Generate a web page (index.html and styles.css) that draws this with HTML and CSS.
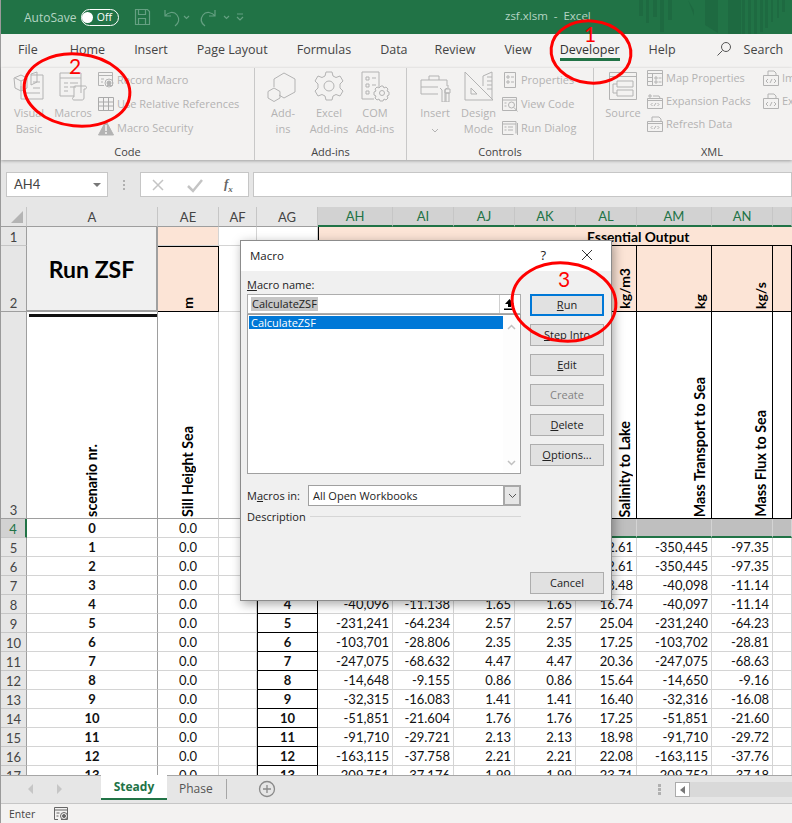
FILE: index.html
```html
<!DOCTYPE html>
<html lang="en">
<head>
  <meta charset="utf-8">
  <title>zsf.xlsm - Excel</title>
  <link rel="stylesheet" href="styles.css">
</head>
<body>
<div class="window">

  <!-- title bar -->
  <div class="titlebar">
    <svg class="pattern" width="172" height="34" viewBox="0 0 172 34">
      <path d="M19 0h4v16h-4zM26 0h3v23h-3zM33 0h4v17h-4zM40 0h4v32h-4zM48 0h4v20h-4zM68 0l6 10v6zM85 0h13v33l-13-8zM108 0h13v34h-13zM122 0h3v34h-3zM128 0h3v34h-3zM134 0h3v34h-3zM140 0h3v32h-3zM145 0h3v28h-3zM151 0h2v22h-2zM157 0h2v18h-2zM162 0h3v12h-3z"/>
    </svg>
    <span class="autosave">AutoSave</span>
    <span class="toggle"><i></i>Off</span>
    <svg class="qat" width="110" height="20" viewBox="0 0 110 20">
      <path d="M1.500 2.500h12l2 2v13h-14zM4.500 2.500v5h7v-5M4.500 17.500v-6h7v6"/>
      <path d="M31 3v6h6M31 9c3-4 9-5 12-1s2 8-2 11"/>
      <path d="M50 9l2.500 2.500 2.500-2.500" />
      <path d="M81 3v6h-6M81 9c-3-4-9-5-12-1s-2 8 2 11"/>
      <path d="M90 9l2.500 2.500 2.500-2.500" />
      <path d="M103 7h6M103 10l3 3 3-3"/>
    </svg>
    <span class="doc-title">zsf.xlsm &nbsp;-&nbsp; Excel</span>
  </div>

  <!-- ribbon tabs -->
  <div class="tabs">
    <span class="tab-file">File</span>
    <span>Home</span>
    <span>Insert</span>
    <span>Page Layout</span>
    <span>Formulas</span>
    <span class="tab-data">Data</span>
    <span>Review</span>
    <span class="tab-view">View</span>
    <span class="active">Developer</span>
    <span>Help</span>
    <svg class="search-icon" width="16" height="16" viewBox="0 0 16 16"><circle cx="10" cy="6" r="4.500"/><path d="M6.500 9.500L1.500 14.500"/></svg>
    <span class="search">Search</span>
  </div>

  <!-- ribbon -->
  <div class="ribbon">
    <div class="group group-code">
      <div class="group-body">
        <div class="big w44">
          <svg width="32" height="32" viewBox="0 0 32 32"><path d="M8 16v13h22V5H18M20 12h7M20 18h7M12 23h15"/><path d="M1 8l7-3 6 3v10l-6 3-6-3zM8 11v10M2 8l6 3 6-3M18 4l6-2v10l-6 3z"/></svg>
          <span>Visual<br>Basic</span>
        </div>
        <div class="big w44">
          <svg width="32" height="32" viewBox="0 0 32 32"><path d="M24 23V3H3v23h14M3 8h21M7 13h4M13 13h8M7 17h4M13 17h6M7 21h4"/><path d="M18 16h10c2 0 2 3 0 3h-1v9c0 2-2 2-2 2h-8c-2 0-2-3 0-3v-9c0-1 0-2 1-2z"/></svg>
          <span>Macros</span>
        </div>
        <div class="small-col col-code">
          <div class="small"><svg width="16" height="16" viewBox="0 0 16 16"><path d="M.5.5h14v13H9M.5 3.500h14M.5.5v13H6M3 7h3M3 10h2"/><circle cx="11" cy="11" r="4"/><circle cx="11" cy="11" r="2" class="fill"/></svg>Record Macro</div>
          <div class="small"><svg width="16" height="16" viewBox="0 0 16 16"><path d="M.5 1.500h15v13H.5zM.5 6h15M.5 10h15M5.500 1.500v13M10.500 1.500v13" class="thick"/></svg>Use Relative References</div>
          <div class="small"><svg width="16" height="16" viewBox="0 0 16 16"><path d="M8 1l7.500 14H.5z" class="fill"/><path d="M8 5v6M8 12v2" class="white"/></svg>Macro Security</div>
        </div>
      </div>
      <div class="group-label">Code</div>
    </div>

    <div class="group group-addins">
      <div class="group-body">
        <div class="big w46">
          <svg width="32" height="32" viewBox="0 0 32 32"><path d="M17 3l11 6v13l-11 6-5-3M7 17V9l10-6"/><path d="M7 18l6 3.500V28l-6 3.500L1 28v-6.500z"/></svg>
          <span>Add-<br>ins</span>
        </div>
        <div class="big w46">
          <svg width="32" height="32" viewBox="0 0 32 32"><path d="M13 2h6l1 4 3 1.500 4-1.500 3 5-3 3v4l3 3-3 5-4-1.500-3 1.500-1 4h-6l-1-4-3-1.500-4 1.500-3-5 3-3v-4l-3-3 3-5 4 1.500L12 6z"/><circle cx="16" cy="16" r="5"/></svg>
          <span>Excel<br>Add-ins</span>
        </div>
        <div class="big w46">
          <svg width="32" height="32" viewBox="0 0 32 32"><path d="M20 17V2H3v27h12M7 7h3v3H7zM13 8h4M7 14h3v3H7zM13 15h4M7 21h3v3H7z"/><path d="M22 16l2 0 1 2 2-1 2 2-1 2 2 1v3l-2 1 1 2-2 2-2-1-1 2h-3l-1-2-2 1-2-2 1-2-2-1v-3l2-1-1-2 2-2 2 1z"/><circle cx="23" cy="23" r="2.500"/></svg>
          <span>COM<br>Add-ins</span>
        </div>
      </div>
      <div class="group-label">Add-ins</div>
    </div>

    <div class="group group-controls">
      <div class="group-body">
        <div class="big w44">
          <svg width="32" height="32" viewBox="0 0 32 32"><path d="M2 10h26v6M2 10v14h17M10 10V6h10v4M2 17h17"/><path d="M21 18l2 2v12h3V20l2-2M29 15v4M26 19h5v4h-5zM27 23h3v9h-3z"/></svg>
          <span>Insert<br><svg class="caret" width="8" height="5" viewBox="0 0 8 5"><path d="M1 1l3 3 3-3"/></svg></span>
        </div>
        <div class="big w43">
          <svg width="32" height="32" viewBox="0 0 32 32"><path d="M2 2l28 28H2zM8 18l6 6H8z"/><path d="M20 6l9-4v27M20 6v10M24 7h5M24 11h5M24 15h5M24 19h5"/></svg>
          <span>Design<br>Mode</span>
        </div>
        <div class="small-col col-controls">
          <div class="small"><svg width="16" height="16" viewBox="0 0 16 16"><path d="M2.500.5h11v15h-11zM5 4h2v2H5zM9 5h3M5 9h2v2H5zM9 10h3"/></svg>Properties</div>
          <div class="small"><svg width="16" height="16" viewBox="0 0 16 16"><path d="M.5 1.500h14v13h-14zM.5 4h14M2.500 7h2M2.500 10h2"/><circle cx="9.500" cy="9" r="3"/><path d="M12 11.500l3.500 4" /></svg>View Code</div>
          <div class="small"><svg width="16" height="16" viewBox="0 0 16 16"><path d="M14 13.500V1.500H.5v13h11M.5 4h13.500M2.500 7h2M6 7h5M2.500 10h2M6 10h5M15.500 3v12"/></svg>Run Dialog</div>
        </div>
      </div>
      <div class="group-label">Controls</div>
    </div>

    <div class="group group-xml">
      <div class="group-body">
        <div class="big w50">
          <svg width="32" height="32" viewBox="0 0 32 32"><path d="M2.500 2.500h27v27h-27zM2.500 6.500h27"/><path d="M10 11h16v6H10zM10 20h16v6H10zM6 14h4M6 14v9h4"/></svg>
          <span>Source</span>
        </div>
        <div class="small-col col-xml">
          <div class="small"><svg width="16" height="16" viewBox="0 0 16 16"><path d="M.5.5h15v15H.5zM.5 3.500h15M5.500 3.500v12M.5 7.500h5M.5 11.500h5M8 7h2v2H8zM11.500 8h3M8 11h2v2H8zM11.500 12h3"/></svg>Map Properties</div>
          <div class="small"><svg width="16" height="16" viewBox="0 0 16 16"><path d="M.5 5.500h15v10H.5zM.5 7.500h15M3 1v4M1 3h4M6 3h6l1 2M5.500 10l-1.500 1.500L5.500 13M10.500 10l1.500 1.500L10.500 13M7 13l2-3"/></svg>Expansion Packs</div>
          <div class="small"><svg width="16" height="16" viewBox="0 0 16 16"><path d="M.5 5.500h15v10H.5zM.5 7.500h15M5 5V1h7l2 2v2M5.500 10l-1.500 1.500L5.500 13M10.500 10l1.500 1.500L10.500 13M7 13l2-3"/></svg>Refresh Data</div>
        </div>
        <div class="small-col col-xml2">
          <div class="small"><svg width="16" height="16" viewBox="0 0 16 16"><path d="M.5 5.500h15v10H.5zM5 5V1h6l2 2v2M5 9l-2 2 2 2M11 9l2 2-2 2M7 13l2-4"/></svg>Import</div>
          <div class="small"><svg width="16" height="16" viewBox="0 0 16 16"><path d="M.5 5.500h15v10H.5zM5 5V1h6l2 2v2M5 9l-2 2 2 2M11 9l2 2-2 2M7 13l2-4"/></svg>Export</div>
        </div>
      </div>
      <div class="group-label">XML</div>
    </div>
  </div>

  <!-- formula bar -->
  <div class="formula-bar">
    <div class="name-box">AH4<i class="name-arrow"></i></div>
    <div class="grip"></div>
    <div class="fx-box">
      <svg width="16" height="16" viewBox="0 0 16 16"><path d="M3 3l10 10M13 3L3 13" class="soft"/></svg>
      <svg width="18" height="16" viewBox="0 0 18 16"><path d="M2 9l5 5 9-11" class="soft-thick"/></svg>
      <em>f<sub>x</sub></em>
    </div>
    <div class="fx-input"></div>
  </div>

  <!-- sheet -->
  <div class="sheet">
    <table class="grid">
      <colgroup>
        <col class="c-head"><col class="c-a"><col class="c-s"><col class="c-f"><col class="c-s">
        <col class="c-w"><col class="c-s"><col class="c-s"><col class="c-s"><col class="c-s">
        <col class="c-w"><col class="c-s"><col class="c-o">
      </colgroup>
      <tr class="r-head">
        <th class="corner"><i></i></th>
        <th>A</th><th>AE</th><th>AF</th><th>AG</th>
        <th class="sel">AH</th><th class="sel">AI</th><th class="sel">AJ</th><th class="sel">AK</th>
        <th class="sel">AL</th><th class="sel">AM</th><th class="sel">AN</th><th class="sel"></th>
      </tr>
      <tr class="r1">
        <th class="rh">1</th>
        <td rowspan="2" class="run">Run ZSF</td>
        <td class="peach"></td><td></td><td></td>
        <td colspan="8" class="essential">Essential Output</td>
      </tr>
      <tr class="r2">
        <th class="rh bot">2</th>
        <td class="unit ctr box"><div class="up">m</div></td>
        <td></td><td></td>
        <td class="unit box"></td><td class="unit box"></td><td class="unit box"></td><td class="unit box"></td>
        <td class="unit box"><div class="up">kg/m3</div></td>
        <td class="unit box"><div class="up">kg</div></td>
        <td class="unit box"><div class="up">kg/s</div></td>
        <td class="unit box"></td>
      </tr>
      <tr class="r3">
        <th class="rh bot">3</th>
        <td class="label ctr a-edge dbl"><div class="up">scenario nr.</div></td>
        <td class="label ctr"><div class="up">Sill Height Sea</div></td>
        <td></td><td></td>
        <td class="label"></td><td class="label"></td><td class="label"></td><td class="label"></td>
        <td class="label bk"><div class="up">Salinity to Lake</div></td>
        <td class="label bk"><div class="up">Mass Transport to Sea</div></td>
        <td class="label bk"><div class="up">Mass Flux to Sea</div></td>
        <td class="bk"></td>
      </tr>
      <tr class="r4">
        <th class="rh rsel">4</th><td class="id a-edge">0</td><td class="v">0.0</td><td></td><td></td>
        <td class="g"></td><td class="g"></td><td class="g"></td><td class="g"></td><td class="g"></td><td class="g"></td><td class="g"></td><td class="g"></td>
      </tr>
      <tr><th class="rh">5</th><td class="id a-edge">1</td><td class="v">0.0</td><td></td><td class="ag">1</td><td></td><td></td><td></td><td></td><td>22.61</td><td>-350,445</td><td>-97.35</td><td></td></tr>
      <tr><th class="rh">6</th><td class="id a-edge">2</td><td class="v">0.0</td><td></td><td class="ag">2</td><td></td><td></td><td></td><td></td><td>22.61</td><td>-350,445</td><td>-97.35</td><td></td></tr>
      <tr><th class="rh">7</th><td class="id a-edge">3</td><td class="v">0.0</td><td></td><td class="ag">3</td><td></td><td></td><td></td><td></td><td>18.48</td><td>-40,098</td><td>-11.14</td><td></td></tr>
      <tr><th class="rh">8</th><td class="id a-edge">4</td><td class="v">0.0</td><td></td><td class="ag">4</td><td>-40,096</td><td>-11.138</td><td>1.65</td><td>1.65</td><td>16.74</td><td>-40,097</td><td>-11.14</td><td></td></tr>
      <tr><th class="rh">9</th><td class="id a-edge">5</td><td class="v">0.0</td><td></td><td class="ag">5</td><td>-231,241</td><td>-64.234</td><td>2.57</td><td>2.57</td><td>25.04</td><td>-231,240</td><td>-64.23</td><td></td></tr>
      <tr><th class="rh">10</th><td class="id a-edge">6</td><td class="v">0.0</td><td></td><td class="ag">6</td><td>-103,701</td><td>-28.806</td><td>2.35</td><td>2.35</td><td>17.25</td><td>-103,702</td><td>-28.81</td><td></td></tr>
      <tr><th class="rh">11</th><td class="id a-edge">7</td><td class="v">0.0</td><td></td><td class="ag">7</td><td>-247,075</td><td>-68.632</td><td>4.47</td><td>4.47</td><td>20.36</td><td>-247,075</td><td>-68.63</td><td></td></tr>
      <tr><th class="rh">12</th><td class="id a-edge">8</td><td class="v">0.0</td><td></td><td class="ag">8</td><td>-14,648</td><td>-9.155</td><td>0.86</td><td>0.86</td><td>15.64</td><td>-14,650</td><td>-9.16</td><td></td></tr>
      <tr><th class="rh">13</th><td class="id a-edge">9</td><td class="v">0.0</td><td></td><td class="ag">9</td><td>-32,315</td><td>-16.083</td><td>1.41</td><td>1.41</td><td>16.40</td><td>-32,316</td><td>-16.08</td><td></td></tr>
      <tr><th class="rh">14</th><td class="id a-edge">10</td><td class="v">0.0</td><td></td><td class="ag">10</td><td>-51,851</td><td>-21.604</td><td>1.76</td><td>1.76</td><td>17.25</td><td>-51,851</td><td>-21.60</td><td></td></tr>
      <tr><th class="rh">15</th><td class="id a-edge">11</td><td class="v">0.0</td><td></td><td class="ag">11</td><td>-91,710</td><td>-29.721</td><td>2.13</td><td>2.13</td><td>18.98</td><td>-91,710</td><td>-29.72</td><td></td></tr>
      <tr><th class="rh">16</th><td class="id a-edge">12</td><td class="v">0.0</td><td></td><td class="ag">12</td><td>-163,115</td><td>-37.758</td><td>2.21</td><td>2.21</td><td>22.08</td><td>-163,115</td><td>-37.76</td><td></td></tr>
      <tr><th class="rh">17</th><td class="id a-edge">13</td><td class="v">0.0</td><td></td><td class="ag">13</td><td>-209,751</td><td>-37.176</td><td>1.99</td><td>1.99</td><td>23.71</td><td>-209,752</td><td>-37.18</td><td></td></tr>
    </table>
  </div>

  <!-- sheet tabs -->
  <div class="sheet-tabs">
    <svg class="tab-nav" width="46" height="12" viewBox="0 0 46 12"><path d="M6 1L1 6l5 5zM30 1l5 5-5 5z"/></svg>
    <span class="sheet-tab active">Steady</span>
    <span class="sheet-tab">Phase</span>
    <svg class="add-sheet" width="18" height="18" viewBox="0 0 18 18"><circle cx="9" cy="9" r="7.500"/><path d="M9 5v8M5 9h8"/></svg>
    <div class="hgrip"></div>
    <div class="hscroll"><span class="hbtn"><i></i></span></div>
  </div>

  <!-- status bar -->
  <div class="statusbar">
    <span>Enter</span>
    <svg width="15" height="15" viewBox="0 0 15 15"><path d="M.5 1.500h13v12H7M.5 1.500v12H4M.5 4h13M2.500 7h3M2.500 10h2"/><circle cx="10" cy="10" r="3.500"/><circle cx="10" cy="10" r="1.500" class="dark"/></svg>
  </div>
</div>

<!-- Macro dialog -->
<div class="dialog">
  <div class="dlg-title">
    <span>Macro</span>
    <span class="dlg-help">?</span>
    <svg width="12" height="12" viewBox="0 0 12 12"><path d="M1 1l10 10M11 1L1 11"/></svg>
  </div>
  <div class="dlg-body">
    <div class="dlg-left">
      <div class="dlg-label"><u>M</u>acro name:</div>
      <div class="name-input">
        <span class="picked">CalculateZSF</span>
        <span class="ref-btn"><svg width="11" height="11" viewBox="0 0 11 11"><path d="M5.500 0L10 5H7v3H4V5H1zM0 9.500h11v1.500H0z"/></svg></span>
      </div>
      <div class="macro-list">
        <div class="list-items"><div class="list-item">CalculateZSF</div></div>
        <div class="list-scroll">
          <svg width="9" height="6" viewBox="0 0 9 6"><path d="M1 5l3.500-3.500L8 5"/></svg>
          <svg width="9" height="6" viewBox="0 0 9 6"><path d="M1 1l3.500 3.500L8 1"/></svg>
        </div>
      </div>
      <div class="macros-in">
        <span><span class="in-label">M<u>a</u>cros in:</span></span>
        <div class="in-select">All Open Workbooks<span class="in-arrow"><svg width="9" height="6" viewBox="0 0 9 6"><path d="M1 1l3.500 3.500L8 1"/></svg></span></div>
      </div>
      <div class="desc"><span>Description</span><i></i></div>
    </div>
    <div class="dlg-right">
      <div class="btn primary"><span><u>R</u>un</span></div>
      <div class="btn"><span><u>S</u>tep Into</span></div>
      <div class="btn"><span><u>E</u>dit</span></div>
      <div class="btn off"><span>Create</span></div>
      <div class="btn"><span><u>D</u>elete</span></div>
      <div class="btn"><span><u>O</u>ptions...</span></div>
      <div class="btn cancel"><span>Cancel</span></div>
    </div>
  </div>
</div>

<!-- red annotations drawn on the screenshot -->
<svg class="marks" width="792" height="823" viewBox="0 0 792 823">
  <ellipse cx="591" cy="52" rx="40" ry="31" transform="rotate(6 591 52)"/>
  <ellipse cx="77" cy="90" rx="53" ry="36" transform="rotate(6 77 90)"/>
  <ellipse cx="564" cy="302" rx="52" ry="39" transform="rotate(6 564 302)"/>
  <text x="590" y="42">1</text>
  <text x="75" y="74">2</text>
  <text x="564" y="287">3</text>
</svg>
</body>
</html>
```

FILE: styles.css
```css
* {
  box-sizing: border-box;
}

html, body {
  margin: 0;
  padding: 0;
}

body {
  position: relative;
  width: 792px;
  height: 823px;
  overflow: hidden;
  font-family: "Open Sans", sans-serif;
  font-size: 11px;
  color: #444;
  background: #e6e6e6;
}

.window {
  display: flex;
  flex-direction: column;
  height: 823px;
  border-left: 1px solid #9a9a9a;
}

/* title bar */
.titlebar {
  position: relative;
  display: flex;
  align-items: center;
  height: 34px;
  padding-left: 23px;
  background: #217346;
  color: #b5d5c4;
  font-size: 12px;
}

.pattern {
  position: absolute;
  top: 0;
  right: 0;
}

.pattern path {
  fill: #1e6a41;
}

.autosave {
  width: 57px;
}

.toggle {
  display: flex;
  align-items: center;
  justify-content: flex-end;
  width: 38px;
  height: 17px;
  padding-right: 6px;
  border: 1px solid #fff;
  border-radius: 9px;
  color: #fff;
  font-size: 10.5px;
}

.toggle i {
  width: 11px;
  height: 11px;
  margin-right: 4px;
  border-radius: 50%;
  background: #fff;
}

.qat {
  margin-left: 15px;
}

.qat path {
  fill: none;
  stroke: #65a082;
  stroke-width: 1.2;
}

.doc-title {
  position: absolute;
  left: 504px;
  top: 8px;
  font-size: 11.5px;
}

/* ribbon tabs */
.tabs {
  display: flex;
  align-items: center;
  gap: 29px;
  height: 34px;
  padding: 0 0 4px 17px;
  background: #f3f2f1;
  color: #444;
  font-size: 12.5px;
  white-space: nowrap;
}

.tab-file {
  margin-right: 3px;
}

.tab-data {
  margin-right: -2px;
}

.tab-view {
  margin-right: -1px;
}

.tabs .active {
  position: relative;
  color: #333;
}

.tabs .active::after {
  content: "";
  position: absolute;
  left: 0;
  right: 0;
  bottom: -3px;
  height: 3px;
  background: #217346;
}

.search-icon {
  margin-left: 11px;
}

.search-icon circle, .search-icon path {
  fill: none;
  stroke: #555;
}

.search {
  margin-left: -17px;
}

/* ribbon */
.ribbon {
  position: relative;
  z-index: 1;
  display: flex;
  height: 92px;
  overflow: hidden;
  background: #f3f2f1;
  box-shadow: 0 1px 3px rgba(0, 0, 0, 0.3);
  color: #b3b3b3;
  font-size: 11px;
  line-height: 16px;
}

.group {
  display: flex;
  flex: none;
  flex-direction: column;
  height: 92px;
}

.group-code {
  width: 254px;
  border-right: 1px solid #c8c8c8;
  margin: 0;
}

.group-addins {
  width: 152px;
  border-right: 1px solid #c8c8c8;
}

.group-controls {
  width: 187px;
  border-right: 1px solid #c8c8c8;
}

.group-xml {
  width: 236px;
}

.group-body {
  display: flex;
  flex: 1;
  padding-top: 2px;
}

.group-label {
  height: 16px;
  text-align: center;
  color: #444;
  font-size: 11px;
  line-height: 16px;
}

.group-code .group-body {
  padding-left: 6px;
}

.group-addins .group-body {
  padding-left: 5px;
}

.group-controls .group-body {
  padding-left: 6px;
}

.group-xml .group-body {
  padding-left: 4px;
}

.big {
  display: flex;
  flex: none;
  flex-direction: column;
  align-items: center;
  text-align: center;
  white-space: nowrap;
}

.big span {
  margin-top: 3px;
}

.w43 { width: 43px; }
.w44 { width: 44px; }
.w46 { width: 46px; }
.w50 { width: 50px; }

.ribbon svg path, .ribbon svg circle {
  fill: none;
  stroke: #b3b3b3;
}

.ribbon svg .fill {
  fill: #b3b3b3;
}

.ribbon svg .white {
  stroke: #f3f2f1;
  stroke-width: 1.6;
}

.ribbon svg .thick {
  stroke: #aaa;
}

.small-col {
  display: flex;
  flex-direction: column;
  flex: none;
  padding-top: 2px;
  white-space: nowrap;
}

.col-code {
  gap: 8px;
  margin-left: 3px;
}

.col-controls {
  gap: 8px;
  margin-left: 2px;
}

.col-xml {
  gap: 7px;
  width: 116px;
  margin-left: -1px;
  padding-top: 0;
}

.col-xml2 {
  gap: 7px;
  padding-top: 0;
}

.small {
  display: flex;
  align-items: center;
  gap: 3px;
  height: 16px;
}

/* formula bar */
.formula-bar {
  display: flex;
  align-items: center;
  height: 47px;
  padding: 2px 0 0 5px;
  background: #e6e6e6;
}

.name-box {
  position: relative;
  width: 102px;
  height: 25px;
  padding-left: 7px;
  border: 1px solid #c6c6c6;
  background: #fff;
  color: #444;
  font-family: Lato, sans-serif;
  font-size: 13px;
  line-height: 23px;
}

.name-arrow {
  position: absolute;
  top: 10px;
  right: 6px;
  border-top: 4px solid #777;
  border-left: 4px solid transparent;
  border-right: 4px solid transparent;
}

.grip {
  width: 2px;
  height: 10px;
  margin: 0 15px 0 15px;
  border-top: 2px solid #b0b0b0;
  border-bottom: 2px solid #b0b0b0;
  background: linear-gradient(#e6e6e6 30%, #b0b0b0 30%, #b0b0b0 60%, #e6e6e6 60%);
}

.fx-box {
  display: flex;
  align-items: center;
  gap: 20px;
  width: 109px;
  height: 25px;
  padding: 0 0 0 9px;
  border: 1px solid #c6c6c6;
  background: #fff;
}

.fx-box em {
  font-family: "Liberation Serif", serif;
  font-size: 13px;
  font-weight: bold;
  color: #666;
}

.fx-box sub {
  font-size: 9px;
}

.soft {
  fill: none;
  stroke: #c4c4c4;
  stroke-width: 1.5;
}

.soft-thick {
  fill: none;
  stroke: #c4c4c4;
  stroke-width: 2.5;
}

.fx-input {
  flex: 1;
  height: 25px;
  margin-left: 4px;
  border: 1px solid #c6c6c6;
  background: #fff;
}

/* sheet */
.sheet {
  flex: none;
  height: 568px;
  overflow: hidden;
  background: #fff;
}

.grid {
  table-layout: fixed;
  width: 791px;
  border-collapse: separate;
  border-spacing: 0;
  font-family: Lato, sans-serif;
  font-size: 13px;
  color: #111;
}

.c-head { width: 26px; }
.c-a { width: 131px; }
.c-s { width: 61px; }
.c-f { width: 38px; }
.c-w { width: 75px; }
.c-o { width: 19px; }

.grid td, .grid th {
  height: 19px;
  padding: 0;
  border-right: 1px solid #d4d4d4;
  border-bottom: 1px solid #d4d4d4;
  overflow: hidden;
  white-space: nowrap;
}

.grid td {
  padding-right: 3px;
  text-align: right;
}

.grid th {
  background: #e6e6e6;
  border-color: #c6c6c6;
  color: #444;
  font-weight: normal;
  text-align: center;
}

.r-head th {
  height: 20px;
  border-bottom-color: #9e9e9e;
}

.r-head th.sel {
  background: #d2d2d2;
  color: #217346;
  border-bottom: 2px solid #217346;
}

.corner {
  position: relative;
}

.corner i {
  position: absolute;
  right: 3px;
  bottom: 3px;
  border-bottom: 12px solid #b4b4b4;
  border-left: 12px solid transparent;
}

.r2 td, .r2 th { height: 66px; }
.r3 td, .r3 th { height: 207px; }

.grid th.rh {
  vertical-align: bottom;
  border-right-color: #9e9e9e;
}

.grid th.rsel {
  background: #d2d2d2;
  color: #217346;
  border-right: 2px solid #217346;
}

.grid th.bot {
  border-bottom-color: #9e9e9e;
}

.grid td.run {
  padding: 0;
  background: #f0f0f0;
  border-right: 2px solid #a0a0a0;
  border-bottom: 2px solid #a0a0a0;
  color: #000;
  font-size: 23px;
  font-weight: bold;
  text-align: center;
}

.peach {
  background: #fce4d6;
}

.grid td.essential {
  padding: 0 0 0 268px;
  background: #fce4d6;
  border-left: 1px solid #000;
  border-bottom: 1px solid #000;
  border-right: 0;
  color: #000;
  font-size: 13.8px;
  font-weight: bold;
  text-align: left;
}

.grid td.unit {
  vertical-align: bottom;
  padding: 0 3px 2px 0;
  background: #fce4d6;
  color: #000;
  font-size: 14px;
  font-weight: bold;
}

.grid td.box {
  border-right-color: #000;
  border-bottom-color: #000;
}

.r2 td.box:nth-child(6) {
  border-left: 1px solid #000;
}

.r2 td.unit.ctr {
  border-top: 1px solid #000;
}

.up {
  width: fit-content;
  margin-left: auto;
  writing-mode: vertical-rl;
  transform: rotate(180deg);
  line-height: 16px;
}

.ctr .up {
  margin-right: auto;
}

.grid td.label {
  vertical-align: bottom;
  padding: 0 3px 1px 0;
  font-size: 14.3px;
  font-weight: bold;
  color: #000;
}

.grid td.ctr {
  padding-right: 0;
  text-align: center;
}

.grid td.bk {
  border-right-color: #000;
  border-bottom-color: #000;
}

.r3 td {
  border-bottom-color: #9e9e9e;
}

.grid td.dbl {
  position: relative;
}

.grid td.dbl::before {
  content: "";
  position: absolute;
  top: 2px;
  left: 2px;
  right: 0;
  height: 3px;
  background: #111;
}

.grid td.a-edge {
  border-right-color: #9e9e9e;
}

.grid td.id {
  padding: 0;
  text-align: center;
  font-weight: bold;
}

.grid td.v {
  padding: 0;
  text-align: center;
}

.grid td.ag {
  padding: 0;
  border-bottom-color: #000;
  border-right-color: #000;
  border-left: 1px solid #000;
  text-align: center;
  font-weight: bold;
}

.grid td.g {
  background: #bfbfbf;
  border-bottom: 2px solid #217346;
  border-right-color: #d4d4d4;
}

/* sheet tabs */
.sheet-tabs {
  position: relative;
  display: flex;
  flex: none;
  align-items: flex-start;
  height: 29px;
  border-top: 1px solid #a6a6a6;
  border-bottom: 1px solid #c6c6c6;
  background: #e6e6e6;
  color: #555;
  font-size: 12px;
}

.tab-nav {
  flex: none;
  margin: 7px 0 0 26px;
}

.tab-nav path {
  fill: #c6c6c6;
}

.sheet-tab {
  display: block;
  padding: 0 13px 0 12px;
  height: 25px;
  line-height: 23px;
}

.sheet-tab.active {
  width: 66px;
  margin-left: 28px;
  margin-top: -1px;
  height: 25px;
  padding: 0;
  text-align: center;
  background: #fff;
  border-bottom: 2px solid #217346;
  color: #217346;
  font-weight: bold;
}

.sheet-tab:not(.active) {
  border-right: 1px solid #a6a6a6;
  height: 20px;
  margin-top: 3px;
  line-height: 19px;
}

.add-sheet {
  margin: 4px 0 0 31px;
}

.add-sheet circle, .add-sheet path {
  fill: none;
  stroke: #8a8a8a;
  stroke-width: 1.3;
}

.hgrip {
  width: 3px;
  height: 11px;
  margin: 8px 0 0 382px;
  background: repeating-linear-gradient(#b0b0b0 0 3px, transparent 3px 4px);
}

.hscroll {
  flex: 1;
  height: 15px;
  margin: 6px 0 0 14px;
  background: #d9d9d9;
}

.hbtn {
  display: flex;
  align-items: center;
  justify-content: center;
  width: 15px;
  height: 15px;
  border: 1px solid #ababab;
  background: #fff;
}

.hbtn i {
  border-right: 5px solid #777;
  border-top: 4px solid transparent;
  border-bottom: 4px solid transparent;
}

/* status bar */
.statusbar {
  display: flex;
  flex: 1;
  align-items: center;
  gap: 19px;
  padding-left: 8px;
  background: #f3f2f1;
  color: #444;
  font-size: 10.5px;
}

.statusbar path, .statusbar circle {
  fill: none;
  stroke: #666;
}

.statusbar .dark {
  fill: #666;
}

/* macro dialog */
.dialog {
  position: absolute;
  z-index: 2;
  left: 240px;
  top: 240px;
  display: flex;
  flex-direction: column;
  width: 372px;
  height: 361px;
  border: 1px solid #8c8c8c;
  background: #f0f0f0;
  box-shadow: 2px 3px 10px rgba(0, 0, 0, 0.35);
  color: #222;
  font-size: 11px;
}

.dlg-title {
  display: flex;
  align-items: center;
  height: 30px;
  padding: 0 18px 2px 9px;
  background: #fff;
  font-size: 11.5px;
}

.dlg-help {
  margin: 0 35px 0 auto;
  font-size: 13px;
}

.dlg-title path {
  fill: none;
  stroke: #333;
}

.dlg-body {
  display: flex;
  flex: 1;
  gap: 9px;
  padding: 6px 7px 6px 6px;
}

.dlg-left {
  width: 274px;
}

.dlg-label {
  height: 16px;
  line-height: 16px;
}

.name-input {
  display: flex;
  align-items: center;
  justify-content: space-between;
  height: 20px;
  margin-top: 1px;
  padding: 0 2px 0 3px;
  border: 1px solid #adadad;
  background: #fff;
}

.picked {
  padding: 0 1px;
  background: #c6c6c6;
  line-height: 14px;
}

.ref-btn {
  display: flex;
  align-items: center;
  justify-content: center;
  width: 19px;
  height: 18px;
  border-left: 1px solid #d0d0d0;
}

.ref-btn path {
  fill: #000;
}

.macro-list {
  display: flex;
  height: 160px;
  padding: 1px;
  border: 1px solid #a0a0a0;
  background: #fff;
}

.list-items {
  width: 254px;
}

.list-item {
  height: 13px;
  padding-left: 2px;
  background: #0078d7;
  color: #fff;
  line-height: 13px;
}

.list-scroll {
  display: flex;
  flex: 1;
  flex-direction: column;
  align-items: center;
  justify-content: space-between;
  padding: 8px 0 6px;
  background: #fdfdfd;
}

.list-scroll path, .in-arrow path {
  fill: none;
  stroke: #c0c0c0;
  stroke-width: 1.5;
}

.macros-in {
  display: flex;
  align-items: center;
  justify-content: space-between;
  margin-top: 11px;
}

.in-select {
  position: relative;
  width: 213px;
  height: 21px;
  padding-left: 4px;
  border: 1px solid #a0a0a0;
  background: #fff;
  line-height: 20px;
}

.in-arrow {
  position: absolute;
  top: -1px;
  right: -1px;
  display: flex;
  align-items: center;
  justify-content: center;
  width: 18px;
  height: 21px;
  border: 2px solid #a8a8a8;
  background: #e6e6e6;
}

.in-arrow path {
  stroke: #555;
  stroke-width: 1;
}

.desc {
  display: flex;
  align-items: center;
  gap: 4px;
  margin-top: 2px;
  height: 16px;
}

.desc i {
  flex: 1;
  height: 1px;
  background: #d6d6d6;
}

.dlg-right {
  display: flex;
  flex-direction: column;
  gap: 8px;
  width: 74px;
  padding-top: 17px;
}

.btn {
  display: flex;
  align-items: center;
  justify-content: center;
  height: 22px;
  padding-bottom: 1px;
  border: 1px solid #adadad;
  background: #e1e1e1;
  color: #222;
}

.btn.primary {
  border: 2px solid #0078d7;
}

.btn.off {
  color: #838383;
}

.btn.cancel {
  margin-top: auto;
}

/* red marks */
.marks {
  position: absolute;
  z-index: 3;
  top: 0;
  left: 0;
  pointer-events: none;
}

.marks ellipse {
  fill: none;
  stroke: #f00;
  stroke-width: 3;
}

.marks text {
  fill: #f00;
  font-family: Lato, sans-serif;
  font-size: 21px;
  text-anchor: middle;
}
```
